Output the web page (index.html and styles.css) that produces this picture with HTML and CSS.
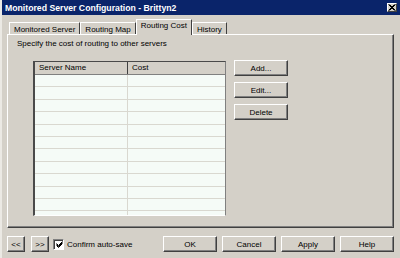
FILE: index.html
```html
<!DOCTYPE html>
<html lang="en">
<head>
    <meta charset="UTF-8">
    <title>Monitored Server Configuration</title>
    <link rel="stylesheet" href="styles.css">
</head>
<body>
    <div class="window">
        <div class="titlebar">
            <span class="title">Monitored Server Configuration - Brittyn2</span>
            <span class="close">
                <svg width="8" height="7" viewBox="0 0 8 7"><path d="M0.5 0.5 L6.5 6.5 M1.5 0.5 L7.5 6.5 M6.5 0.5 L0.5 6.5 M7.5 0.5 L1.5 6.5" stroke="#000" stroke-width="1"/></svg>
            </span>
        </div>
        <div class="main">
            <div class="tabs">
                <div class="tab">Monitored Server</div>
                <div class="tab">Routing Map</div>
                <div class="tab active">Routing Cost</div>
                <div class="tab">History</div>
            </div>
            <div class="panel">
                <div class="hint">Specify the cost of routing to other servers</div>
                <div class="content">
                    <div class="list">
                        <div class="list-head">
                            <div class="col-name">Server Name</div>
                            <div class="col-cost">Cost</div>
                        </div>
                        <div class="row"><div class="col-name"></div><div class="col-cost"></div></div>
                        <div class="row"><div class="col-name"></div><div class="col-cost"></div></div>
                        <div class="row"><div class="col-name"></div><div class="col-cost"></div></div>
                        <div class="row"><div class="col-name"></div><div class="col-cost"></div></div>
                        <div class="row"><div class="col-name"></div><div class="col-cost"></div></div>
                        <div class="row"><div class="col-name"></div><div class="col-cost"></div></div>
                        <div class="row"><div class="col-name"></div><div class="col-cost"></div></div>
                        <div class="row"><div class="col-name"></div><div class="col-cost"></div></div>
                        <div class="row"><div class="col-name"></div><div class="col-cost"></div></div>
                        <div class="row"><div class="col-name"></div><div class="col-cost"></div></div>
                        <div class="row"><div class="col-name"></div><div class="col-cost"></div></div>
                        <div class="row"><div class="col-name"></div><div class="col-cost"></div></div>
                    </div>
                    <div class="side-buttons">
                        <button class="btn">Add...</button>
                        <button class="btn">Edit...</button>
                        <button class="btn">Delete</button>
                    </div>
                </div>
            </div>
            <div class="footer">
                <button class="btn btn-small">&lt;&lt;</button>
                <button class="btn btn-small">&gt;&gt;</button>
                <label class="check">
                    <span class="box">
                        <svg width="7" height="7" viewBox="0 0 7 7"><path d="M0.5 2.5 L2.5 4.5 L6.5 0.5 M0.5 3.5 L2.5 5.5 L6.5 1.5 M0.5 4.5 L2.5 6.5 L6.5 2.5" stroke="#000" stroke-width="1" fill="none"/></svg>
                    </span>
                    Confirm auto-save
                </label>
                <div class="spacer"></div>
                <div class="dialog-buttons">
                    <button class="btn">OK</button>
                    <button class="btn">Cancel</button>
                    <button class="btn">Apply</button>
                    <button class="btn">Help</button>
                </div>
            </div>
        </div>
    </div>
</body>
</html>
```

FILE: styles.css
```css
body {
    margin: 0;
    background: #d4d0c8;
    font-family: "Liberation Sans", Arial, sans-serif;
    font-size: 8px;
    color: #000;
}
.window {
    width: 400px;
    height: 258px;
    box-sizing: border-box;
    border-left: 2px solid #ebe9e4;
    background: #d4d0c8;
    display: flex;
    flex-direction: column;
}
.titlebar {
    height: 15px;
    background: #0a246a;
    display: flex;
    align-items: center;
    justify-content: space-between;
    padding: 0 3px 0 3px;
}
.title {
    color: #fff;
    font-weight: bold;
    font-size: 8.7px;
}
.close {
    width: 10px;
    height: 9px;
    box-sizing: border-box;
    background: #d4d0c8;
    border: 1px solid;
    border-color: #fff #404040 #404040 #fff;
    display: flex;
    align-items: center;
    justify-content: center;
}
.main {
    padding: 4px 6px 0 5px;
}
.tabs {
    display: flex;
    align-items: flex-end;
    height: 15px;
    padding-left: 2px;
}
.tab {
    height: 12px;
    line-height: 12px;
    padding: 0 4px;
    box-sizing: border-box;
    border-top: 1px solid #fff;
    border-left: 1px solid #fff;
    border-right: 1px solid #404040;
    padding-top: 1px;
}
.tab.active {
    height: 16px;
    margin-bottom: -1px;
    padding-top: 0;
    line-height: 12px;
    background: #d4d0c8;
    position: relative;
    z-index: 1;
}
.panel {
    height: 194px;
    box-sizing: border-box;
    border: 1px solid;
    border-color: #fff #404040 #404040 #fff;
    box-shadow: inset -1px -1px #808080;
}
.hint {
    padding: 4px 0 0 9px;
    height: 10px;
    line-height: 10px;
}
.content {
    display: flex;
    gap: 8px;
    padding: 12px 0 0 25px;
}
.list {
    width: 193px;
    height: 155px;
    box-sizing: border-box;
    overflow: hidden;
    background: #f5fbf7;
    border-left: 2px solid #4a4a4a;
    border-top: 1px solid #4a4a4a;
    border-right: 1px solid #808080;
    border-bottom: 1px solid #fff;
}
.list-head {
    display: flex;
    height: 13px;
    box-sizing: border-box;
    background: #d4d0c8;
    border-bottom: 1px solid #808080;
    line-height: 12px;
}
.list-head .col-name {
    border-right: 1px solid #404040;
    padding-left: 4px;
}
.list-head .col-cost {
    padding-left: 4px;
}
.col-name {
    width: 93px;
    box-sizing: border-box;
}
.col-cost {
    flex: 1;
}
.row {
    display: flex;
    height: 12.4px;
    box-sizing: border-box;
    border-bottom: 1px solid #d9d8d0;
}
.row .col-name {
    border-right: 1px solid #d9d8d0;
}
.side-buttons {
    display: flex;
    flex-direction: column;
    gap: 6px;
    margin-top: -1px;
}
.btn {
    width: 54px;
    height: 16px;
    padding: 0;
    box-sizing: border-box;
    background: #d4d0c8;
    border: 1px solid;
    border-color: #fff #404040 #404040 #fff;
    box-shadow: inset -1px -1px #808080;
    font-family: "Liberation Sans", Arial, sans-serif;
    font-size: 8px;
    color: #000;
}
.btn-small {
    width: 18px;
}
.footer {
    display: flex;
    align-items: center;
    margin-top: 8px;
    gap: 6px;
}
.check {
    display: flex;
    align-items: center;
    gap: 3px;
    margin-left: -2px;
}
.box {
    width: 11px;
    height: 11px;
    box-sizing: border-box;
    background: #fff;
    border: 1px solid;
    border-color: #808080 #fff #fff #808080;
    box-shadow: inset 1px 1px #404040;
    display: flex;
    align-items: center;
    justify-content: center;
    padding: 1px 0 0 1px;
}
.spacer {
    flex: 1;
}
.dialog-buttons {
    display: flex;
    gap: 5px;
}
```
